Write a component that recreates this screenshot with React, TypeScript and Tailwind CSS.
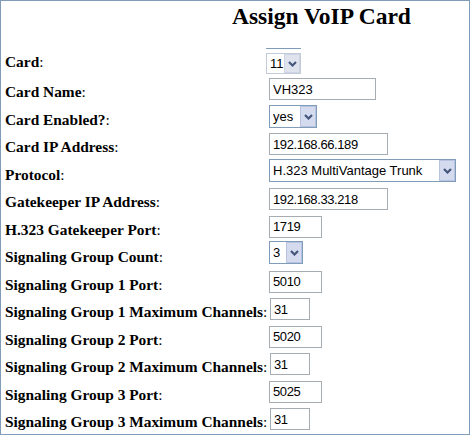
import React from 'react';

const serif = "font-['Liberation_Serif','Times_New_Roman',serif]";
const sans = "font-['Liberation_Sans',Arial,sans-serif]";

function Label({ text }: { text: string }) {
  return (
    <div className={`w-[264px] shrink-0 pt-[8px] text-[15.4px] leading-[17px] text-black ${serif}`}>
      <span className="font-bold">{text}</span>:
    </div>
  );
}

function TextBox({ value, className, numeric }: { value: string; className: string; numeric?: boolean }) {
  return (
    <input
      type="text"
      defaultValue={value}
      className={`mt-[3px] h-[22px] border border-[#a5acb2] bg-white pl-[3px] text-[13px] text-black outline-none ${sans} ${
        numeric ? 'tracking-[-0.4px]' : ''
      } ${className}`}
    />
  );
}

function Chevron() {
  return (
    <svg width="9" height="6" viewBox="0 0 9 6" fill="none">
      <path d="M1 1 L4.5 4.5 L8 1" stroke="#45567c" strokeWidth="2.2" />
    </svg>
  );
}

function Dropdown({
  value,
  options,
  className,
  muted,
}: {
  value: string;
  options: string[];
  className: string;
  muted?: boolean;
}) {
  return (
    <div className={`relative ${className}`}>
      <select
        defaultValue={value}
        className={`block h-full w-full appearance-none border bg-white pl-[3px] text-[13px] text-black outline-none ${sans} ${
          muted ? 'border-[#c3cad8]' : 'border-[#7f9db9]'
        }`}
      >
        {options.map((o) => (
          <option key={o}>{o}</option>
        ))}
      </select>
      <span
        className={`pointer-events-none absolute top-[1px] right-[1px] bottom-[1px] flex w-[16px] items-center justify-center border ${
          muted ? 'border-[#cdd4e4] bg-[#dfe3ee]' : 'border-[#b7c3e0] bg-[#d4dbef]'
        }`}
      >
        <Chevron />
      </span>
    </div>
  );
}

function Row({ children, label }: { children: React.ReactNode; label: string }) {
  return (
    <div className="flex h-[27.5px] items-start">
      <Label text={label} />
      {children}
    </div>
  );
}

export default function App() {
  return (
    <div className="h-[435px] w-[470px] overflow-hidden border border-[#7f9db9] bg-white pl-[4px]">
      {/* Title */}
      <div className="h-[46px] pt-[1px]">
        <h1 className={`pl-[227px] text-[23.5px] font-bold leading-[28px] text-black ${serif}`}>Assign VoIP Card</h1>
      </div>

      {/* Card selector */}
      <div className="flex h-[28px] items-start">
        <div className={`w-[264px] shrink-0 pt-[6px] text-[15.4px] leading-[17px] text-black ${serif}`}>
          <span className="font-bold">Card</span>:
        </div>
        <div className="-ml-[3px] mt-[1px] border-t border-[#7f9db9] pt-[4px]">
          <Dropdown value="11" options={['10', '11', '12']} className="h-[21px] w-[35px]" muted />
        </div>
      </div>

      <Row label="Card Name">
        <TextBox value="VH323" className="w-[107px]" />
      </Row>
      <Row label="Card Enabled?">
        <Dropdown value="yes" options={['yes', 'no']} className="mt-[2.5px] h-[23px] w-[48px]" />
      </Row>
      <Row label="Card IP Address">
        <TextBox value="192.168.66.189" className="w-[119px]" numeric />
      </Row>
      <Row label="Protocol">
        <Dropdown
          value="H.323 MultiVantage Trunk"
          options={['H.323 MultiVantage Trunk', 'SIP Trunk']}
          className="mt-[1.5px] h-[23px] w-[187px]"
        />
      </Row>
      <Row label="Gatekeeper IP Address">
        <TextBox value="192.168.33.218" className="w-[119px]" numeric />
      </Row>
      <Row label="H.323 Gatekeeper Port">
        <TextBox value="1719" className="w-[53px]" numeric />
      </Row>
      <Row label="Signaling Group Count">
        <Dropdown value="3" options={['1', '2', '3', '4']} className="mt-[1px] h-[23px] w-[34px]" />
      </Row>
      <Row label="Signaling Group 1 Port">
        <TextBox value="5010" className="w-[53px]" numeric />
      </Row>
      <Row label="Signaling Group 1 Maximum Channels">
        <TextBox value="31" className="ml-[1px] w-[40px]" numeric />
      </Row>
      <Row label="Signaling Group 2 Port">
        <TextBox value="5020" className="w-[53px]" numeric />
      </Row>
      <Row label="Signaling Group 2 Maximum Channels">
        <TextBox value="31" className="ml-[1px] w-[40px]" numeric />
      </Row>
      <Row label="Signaling Group 3 Port">
        <TextBox value="5025" className="w-[53px]" numeric />
      </Row>
      <Row label="Signaling Group 3 Maximum Channels">
        <TextBox value="31" className="ml-[1px] w-[40px]" numeric />
      </Row>
    </div>
  );
}
